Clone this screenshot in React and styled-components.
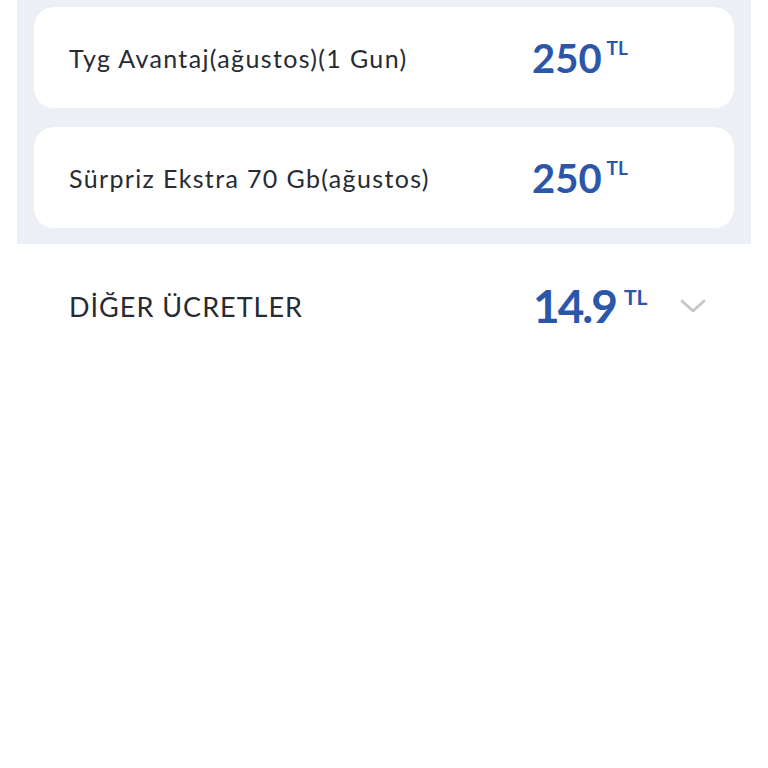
import React from 'react';
import styled, { createGlobalStyle } from 'styled-components';

const Global = createGlobalStyle`
  body {
    margin: 0;
    background: #ffffff;
    font-family: Lato, 'Noto Sans', sans-serif;
    color: #272b33;
  }
`;

const Page = styled.div`
  width: 768px;
  height: 768px;
  background: #ffffff;
  overflow: hidden;
`;

const Panel = styled.div`
  margin: 0 17px;
  padding: 7px 17px 16px;
  background: #eceff3;
  display: flex;
  flex-direction: column;
  gap: 19px;
`;

const Card = styled.div`
  height: 101px;
  background: #ffffff;
  border-radius: 20px;
  display: grid;
  grid-template-columns: 463px auto;
  align-items: center;
  padding: 0 35px;
`;

const Label = styled.span`
  font-size: 25px;
  font-weight: 400;
  letter-spacing: 1.35px;
  color: #272b33;
  white-space: nowrap;
`;

const Price = styled.span`
  display: inline-flex;
  align-items: flex-start;
  color: #2b56a9;
  font-weight: 700;
  font-size: ${p => p.$big ? '46px' : '40px'};
  letter-spacing: ${p => p.$big ? '-2px' : '0'};
  line-height: 1;
`;

const Unit = styled.span`
  font-size: ${p => p.$big ? '21px' : '19px'};
  font-weight: 700;
  letter-spacing: 0;
  margin-left: ${p => p.$big ? '8px' : '5px'};
  margin-top: ${p => p.$big ? '3px' : '0'};
`;

const OtherRow = styled.div`
  display: grid;
  grid-template-columns: 464px 147px auto;
  align-items: center;
  padding: 39px 69px 0;
`;

const OtherLabel = styled.span`
  font-size: 27px;
  letter-spacing: 1px;
  color: #272b33;
`;

const Chevron = () => (
  <svg width="26" height="16" viewBox="0 0 26 16">
    <path d="M2 3 L13 13 L24 3" fill="none" stroke="#c6c6c6" strokeWidth="2.8" strokeLinecap="round" strokeLinejoin="round" />
  </svg>
);

const items = [
  { name: 'Tyg Avantaj(ağustos)(1 Gun)', amount: '250' },
  { name: 'Sürpriz Ekstra 70 Gb(ağustos)', amount: '250' },
];

export default function App() {
  return (
    <Page>
      <Global />
      <Panel>
        {items.map(item => (
          <Card key={item.name}>
            <Label>{item.name}</Label>
            <Price>
              {item.amount}
              <Unit>TL</Unit>
            </Price>
          </Card>
        ))}
      </Panel>
      <OtherRow>
        <OtherLabel>DİĞER ÜCRETLER</OtherLabel>
        <Price $big>
          14.9
          <Unit $big>TL</Unit>
        </Price>
        <Chevron />
      </OtherRow>
    </Page>
  );
}
